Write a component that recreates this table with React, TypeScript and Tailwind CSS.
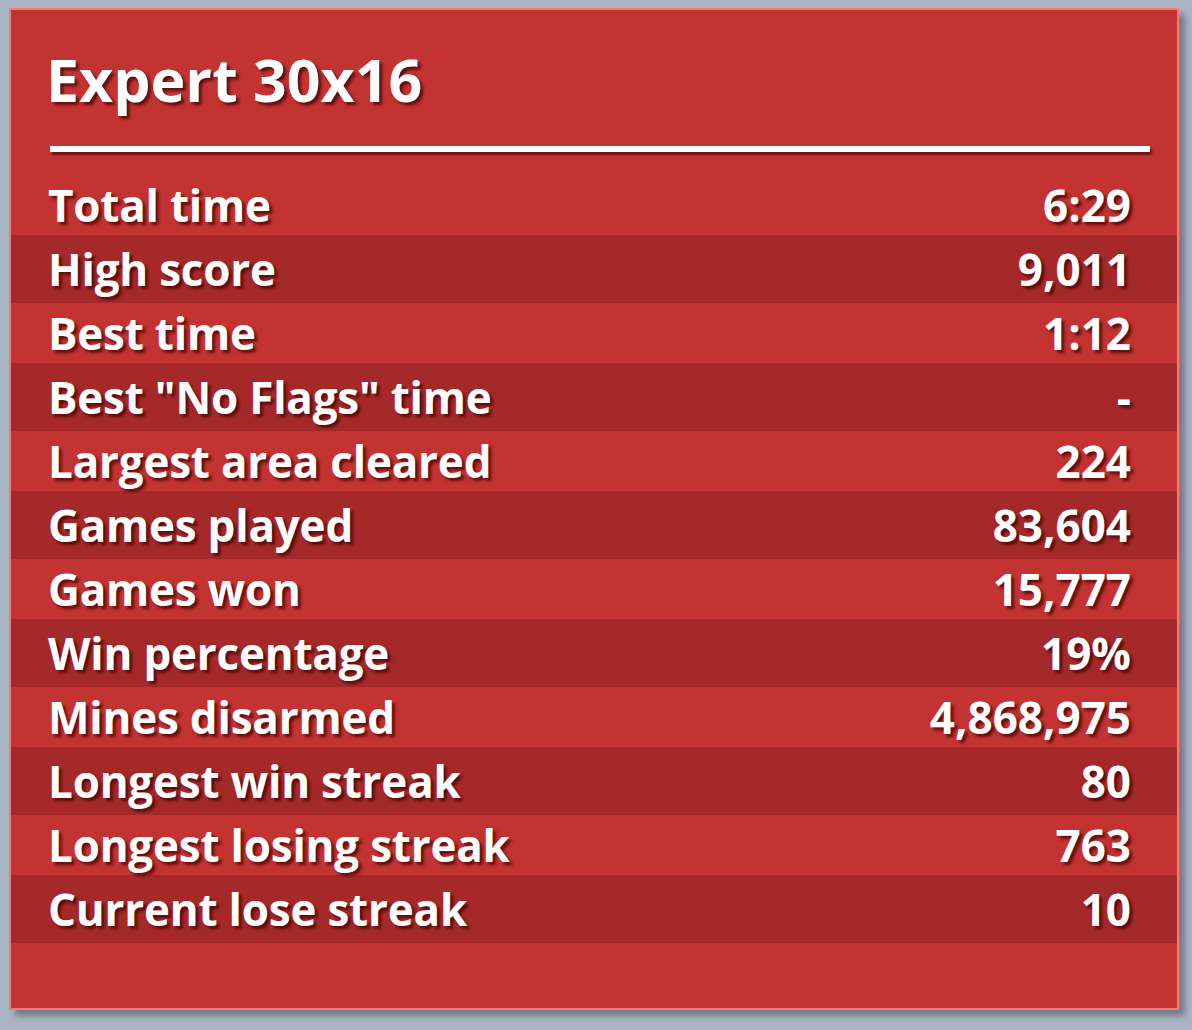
import React from 'react';

interface StatRow {
    label: string;
    value: string;
}

const stats: StatRow[] = [
    { label: 'Total time', value: '6:29' },
    { label: 'High score', value: '9,011' },
    { label: 'Best time', value: '1:12' },
    { label: 'Best "No Flags" time', value: '-' },
    { label: 'Largest area cleared', value: '224' },
    { label: 'Games played', value: '83,604' },
    { label: 'Games won', value: '15,777' },
    { label: 'Win percentage', value: '19%' },
    { label: 'Mines disarmed', value: '4,868,975' },
    { label: 'Longest win streak', value: '80' },
    { label: 'Longest losing streak', value: '763' },
    { label: 'Current lose streak', value: '10' },
];

export default function App() {
    return (
        <div className="w-[1192px] h-[1030px] bg-[#aab5c4] pt-[8px] pl-[9px] font-['Open_Sans',sans-serif]">
            <div className="w-[1170px] h-[1002px] border-2 border-[#f27a77] bg-[#c23331] shadow-[6px_6px_6px_rgba(70,80,95,0.55)] flex flex-col">
                {/* Title */}
                <h1 className="pt-[40px] pl-[35px] text-[59px] leading-none font-bold text-white [text-shadow:3px_3px_3px_rgba(70,0,0,0.75)]">
                    Expert 30x16
                </h1>
                <div className="ml-[39px] mt-[37px] w-[1100px] h-[6px] bg-white shadow-[2px_3px_2px_rgba(60,0,0,0.6)]" />

                {/* Stat rows */}
                <div className="mt-[23px]">
                    {stats.map((row, i) => (
                        <div
                            key={row.label}
                            className={
                                i % 2 === 0
                                    ? 'h-[60px] flex items-center justify-between pl-[37px] pr-[46px]'
                                    : 'h-[68px] flex items-center justify-between pl-[37px] pr-[46px] bg-[#a6292a]'
                            }
                        >
                            <span className="text-[44px] leading-none font-bold tracking-[-0.005em] text-white [text-shadow:3px_3px_3px_rgba(70,0,0,0.75)]">
                                {row.label}
                            </span>
                            <span className="text-[44px] leading-none font-bold text-white [text-shadow:3px_3px_3px_rgba(70,0,0,0.75)]">
                                {row.value}
                            </span>
                        </div>
                    ))}
                </div>
            </div>
        </div>
    );
}
